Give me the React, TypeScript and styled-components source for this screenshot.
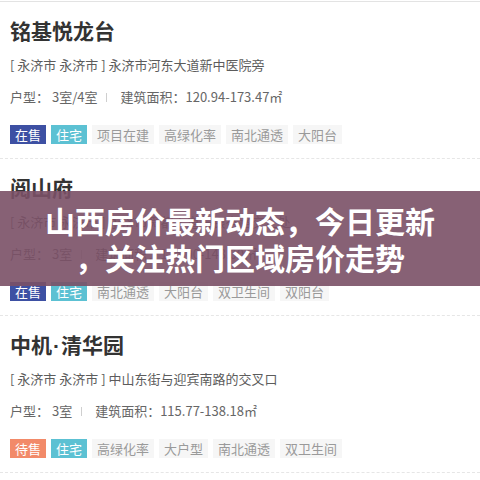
import React from "react";
import styled, { createGlobalStyle } from "styled-components";

const Global = createGlobalStyle`
  html, body { margin: 0; padding: 0; background: #fff; }
  body {
    font-family: "Microsoft YaHei", "Noto Sans CJK SC", "Noto Sans", sans-serif;
    width: 480px;
    height: 480px;
    overflow: hidden;
  }
`;

const Page = styled.div`
  position: relative;
  width: 480px;
  height: 480px;
  overflow: hidden;
  padding-top: 1px;
  box-sizing: border-box;
`;

const List = styled.div`
  display: flex;
  flex-direction: column;
  border-top: 1px solid #e3e3e3;
`;

const Card = styled.div`
  display: flex;
  flex-direction: column;
  padding: 13px 10px 14px;
  border-bottom: 1px dashed #e6e6e6;
`;

const Title = styled.div`
  font-size: 21px;
  line-height: 30px;
  height: 30px;
  font-weight: 700;
  color: #333;
`;

const Dot = styled.span`
  font-family: "Liberation Sans", "DejaVu Sans", sans-serif;
  margin: 0 1px;
`;

const Address = styled.div`
  margin-top: 10px;
  font-size: 13px;
  line-height: 20px;
  height: 20px;
  color: #5c5c5c;
  white-space: nowrap;
`;

const Info = styled.div`
  margin-top: 12px;
  display: flex;
  align-items: center;
  font-size: 13px;
  line-height: 20px;
  height: 20px;
  color: #666;
  white-space: nowrap;
`;

const Divider = styled.span`
  display: inline-block;
  width: 1px;
  height: 9px;
  background: #cfcfcf;
  margin: 0 13px 0 9px;
`;

const Tags = styled.div`
  margin-top: 18px;
  display: flex;
  gap: 5px;
  height: 19px;
`;

type TagKind = "sale" | "wait" | "home" | "plain";

const tagBg: Record<TagKind, string> = {
  sale: "#3d50a3",
  wait: "#f28a69",
  home: "#5cc1d3",
  plain: "#f6f6f6",
};

const Tag = styled.span<{ $kind: TagKind }>`
  display: inline-flex;
  align-items: center;
  padding: 0 5px;
  height: 19px;
  font-size: 13px;
  line-height: 19px;
  background: ${(p) => tagBg[p.$kind]};
  color: ${(p) => (p.$kind === "plain" ? "#9a9a9a" : "#fff")};
`;

const Banner = styled.div`
  position: absolute;
  left: 0;
  right: 0;
  top: 191px;
  height: 95px;
  background: rgba(122, 80, 102, 0.9);
  display: flex;
  flex-direction: column;
  align-items: center;
  justify-content: center;
`;

const BannerLine = styled.div`
  font-size: 30px;
  line-height: 37px;
  font-weight: 700;
  color: #fff;
  white-space: nowrap;
  text-align: center;
`;

type Item = {
  name: string[];
  area: string;
  rooms: string;
  size: string;
  tags: { text: string; kind: TagKind }[];
};

const items: Item[] = [
  {
    name: ["铭基悦龙台"],
    area: "[ 永济市 永济市 ] 永济市河东大道新中医院旁",
    rooms: "3室/4室",
    size: "120.94-173.47㎡",
    tags: [
      { text: "在售", kind: "sale" },
      { text: "住宅", kind: "home" },
      { text: "项目在建", kind: "plain" },
      { text: "高绿化率", kind: "plain" },
      { text: "南北通透", kind: "plain" },
      { text: "大阳台", kind: "plain" },
    ],
  },
  {
    name: ["阅山府"],
    area: "[ 永济市 永济市 ] 永济市舜都大道与银杏路交汇处",
    rooms: "3室",
    size: "115.00-143.00㎡",
    tags: [
      { text: "在售", kind: "sale" },
      { text: "住宅", kind: "home" },
      { text: "南北通透", kind: "plain" },
      { text: "大阳台", kind: "plain" },
      { text: "双卫生间", kind: "plain" },
      { text: "双阳台", kind: "plain" },
    ],
  },
  {
    name: ["中机", "清华园"],
    area: "[ 永济市 永济市 ] 中山东街与迎宾南路的交叉口",
    rooms: "3室",
    size: "115.77-138.18㎡",
    tags: [
      { text: "待售", kind: "wait" },
      { text: "住宅", kind: "home" },
      { text: "高绿化率", kind: "plain" },
      { text: "大户型", kind: "plain" },
      { text: "南北通透", kind: "plain" },
      { text: "双卫生间", kind: "plain" },
    ],
  },
];

export default function App() {
  return (
    <Page>
      <Global />
      <List>
        {items.map((it) => (
          <Card key={it.name.join("")}>
            <Title>
              {it.name.map((part, i) => (
                <React.Fragment key={part}>
                  {i > 0 && <Dot>·</Dot>}
                  {part}
                </React.Fragment>
              ))}
            </Title>
            <Address>{it.area}</Address>
            <Info>
              <span>户型： {it.rooms}</span>
              <Divider />
              <span>建筑面积：{it.size}</span>
            </Info>
            <Tags>
              {it.tags.map((t) => (
                <Tag key={t.text} $kind={t.kind}>
                  {t.text}
                </Tag>
              ))}
            </Tags>
          </Card>
        ))}
      </List>
      <Banner>
        <BannerLine>山西房价最新动态，今日更新</BannerLine>
        <BannerLine>，关注热门区域房价走势</BannerLine>
      </Banner>
    </Page>
  );
}
